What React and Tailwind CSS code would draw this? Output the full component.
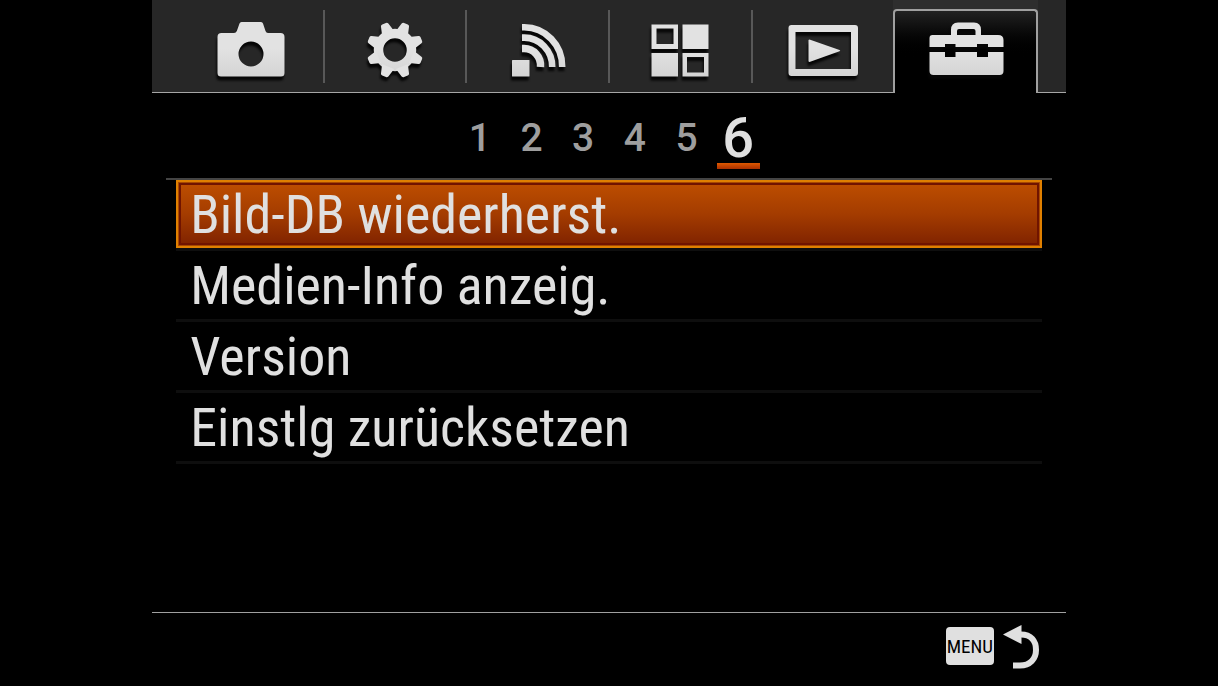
import React from "react";

const GEAR_TEETH = [22.5, 67.5, 112.5, 157.5, 202.5, 247.5, 292.5, 337.5];

function CameraIcon() {
  return (
    <path
      fillRule="evenodd"
      d="M35.500 6H55Q56.500 6 57 7.500L59.500 15Q60.200 17 62 17H74.500Q78.500 17 78.500 21V57Q78.500 60.500 75 60.500H15Q11.500 60.500 11.500 57V21Q11.500 17 15.500 17H28Q30 17 30.800 15L33.500 7.500Q34 6 35.500 6ZM45 25.500A12.500 12.500 0 1 0 45 50.500A12.500 12.500 0 1 0 45 25.500Z"
    />
  );
}

function GearIcon() {
  return (
    <>
      <circle cx="47" cy="34" r="16.5" fill="none" stroke="url(#metal)" strokeWidth="9.500" />
      {GEAR_TEETH.map((angle) => (
        <path
          key={angle}
          transform={`rotate(${angle} 47 34)`}
          d="M40.500 16L43 7Q43.500 5.500 45 5.500H49Q50.500 5.500 51 7L53.500 16Z"
        />
      ))}
    </>
  );
}

function WirelessIcon() {
  return (
    <>
      <rect x="21" y="44" width="17.500" height="16.500" rx="0.500" />
      <g fill="none" stroke="url(#metal)" strokeWidth="6.600">
        <path d="M31 11.300H33A38 39 0 0 1 71.200 51" />
        <path d="M31 21.600H33A28 29 0 0 1 61.200 51" />
        <path d="M31 32.600H33A16.500 17 0 0 1 49.500 51" strokeWidth="7.500" />
      </g>
    </>
  );
}

function ApplicationsIcon() {
  return (
    <path
      fillRule="evenodd"
      d="M18.500 8.500H45V33H18.500ZM23.500 12.500V28H40.500V12.500ZM49.500 8.500H75.500V33H49.500ZM18.500 37H45V60.500H18.500ZM49.500 37H75.500V60.500H49.500ZM54 41V56.500H71V41Z"
    />
  );
}

function PlaybackIcon() {
  return (
    <>
      <path
        fillRule="evenodd"
        d="M15.500 9H79Q82 9 82 12V57Q82 60 79 60H15.500Q12.500 60 12.500 57V12Q12.500 9 15.500 9ZM19.500 16V53H75V16Z"
      />
      <path d="M33.500 23.500L63.500 34Q65 34.600 63.500 35.200L33.500 46Q32.500 46 32.500 45V24.500Q32.500 23.500 33.500 23.500Z" />
    </>
  );
}

function ToolboxIcon() {
  return (
    <>
      <path
        fillRule="evenodd"
        d="M11.500 31V22Q11.500 19 14.500 19H33V14Q33 6.500 40 6.500H56Q63 6.500 63 14V19H80Q85.500 19 85.500 24V31H70V28H59V31H37.500V28H27V31ZM39 19H57.500V15Q57.500 13 55.500 13H41Q39 13 39 15Z"
      />
      <path d="M11.500 36H27V41H37.500V36H59V41H70V36H85.500V55Q85.500 59 81.500 59H15.500Q11.500 59 11.500 55Z" />
    </>
  );
}

const TABS = [
  { label: "Kamera", Icon: CameraIcon },
  { label: "Benutzereinstellungen", Icon: GearIcon },
  { label: "Drahtlos", Icon: WirelessIcon },
  { label: "Applikation", Icon: ApplicationsIcon },
  { label: "Wiedergabe", Icon: PlaybackIcon },
  { label: "Setup", Icon: ToolboxIcon },
];

const PAGES = [1, 2, 3, 4, 5, 6];

const ITEMS = [
  "Bild-DB wiederherst.",
  "Medien-Info anzeig.",
  "Version",
  "Einstlg zurücksetzen",
];

function TabIcon({ Icon }) {
  return (
    <svg
      viewBox="-1 0 96 64"
      className="h-16 w-24 shrink-0 overflow-visible drop-shadow-[-1px_4px_1px_#060606]"
      aria-hidden="true"
    >
      <defs>
        <linearGradient id="metal" gradientUnits="userSpaceOnUse" x1="0" y1="0" x2="0" y2="64">
          <stop offset="0.5" stopColor="#e2e2e2" />
          <stop offset="1" stopColor="#d2d2d2" />
        </linearGradient>
      </defs>
      <g fill="url(#metal)">
        <Icon />
      </g>
    </svg>
  );
}

function Tab({ label, Icon, active, divider }) {
  if (active) {
    return (
      <button
        type="button"
        role="tab"
        aria-selected="true"
        aria-label={label}
        className="-ml-0.5 flex items-start bg-[#2e2e2e] pt-[9px]"
      >
        <span className="flex h-[84px] w-full justify-center rounded-t border-x-2 border-t-2 border-[#a0a0a0] bg-linear-to-b from-[#222222] via-black via-60% to-black pt-[5px]">
          <TabIcon Icon={Icon} />
        </span>
      </button>
    );
  }
  return (
    <button
      type="button"
      role="tab"
      aria-selected="false"
      aria-label={label}
      className="flex items-start border-b border-[#a6a6a6] pt-2.5"
    >
      <span
        className={`flex h-[73px] w-full justify-center border-r-2 pt-1.5 ${
          divider ? "border-[#585858]" : "border-transparent"
        }`}
      >
        <TabIcon Icon={Icon} />
      </span>
    </button>
  );
}

export default function App() {
  return (
    <div className="flex min-h-screen justify-center bg-black font-['Roboto_Condensed','Liberation_Sans',sans-serif] text-[#e0e0e0]">
      <main className="flex w-3/4 flex-col">
        <div className="flex bg-[#272727]">
          <span className="w-[30px] border-b border-[#a6a6a6]" />
          <div role="tablist" className="grid h-[93px] flex-1 grid-cols-6">
            {TABS.map((tab, i) => (
              <Tab
                key={tab.label}
                label={tab.label}
                Icon={tab.Icon}
                active={i === 5}
                divider={i < 4}
              />
            ))}
          </div>
          <span className="w-7 border-b border-[#a6a6a6]" />
        </div>

        <nav
          aria-label="Seiten"
          className="mx-3.5 flex h-[87px] justify-center border-b-2 border-[#444444] font-[Roboto,sans-serif] font-medium"
        >
          <div className="grid w-[310px] grid-cols-6 justify-items-center">
            {PAGES.map((page) =>
              page === 6 ? (
                <button key={page} type="button" aria-current="page" className="flex w-[43px] flex-col items-center">
                  <span className="h-[70px] text-[56px] leading-[90px]">{page}</span>
                  <span className="h-1.5 w-full bg-linear-to-b from-[#e05800] to-[#a83000]" />
                </button>
              ) : (
                <button
                  key={page}
                  type="button"
                  className="flex w-[43px] items-start justify-center text-[39px] leading-[90px] text-[#9e9e9e]"
                >
                  {page}
                </button>
              ),
            )}
          </div>
        </nav>

        <ul className="mx-6">
          {ITEMS.map((item, i) => (
            <li key={item} className="border-b-[3px] border-[#0e0e0e]">
              <button
                type="button"
                className={`block h-[68px] w-full pl-3.5 text-left text-[54px] leading-[70px] whitespace-nowrap ${
                  i === 0
                    ? "bg-linear-to-b from-[#c05000] via-[#a43c00] to-[#7c2000] shadow-[inset_0_0_0_2px_#e08000,inset_0_0_0_3px_#a84800,inset_0_0_0_5px_#701400]"
                    : ""
                }`}
              >
                {item}
              </button>
            </li>
          ))}
        </ul>

        <footer className="mt-auto flex h-[74px] items-start justify-end border-t border-[#a0a0a0] pr-[26px]">
          <button type="button" className="flex items-start gap-2 pt-[11px]" aria-label="MENU zurück">
            <span className="mt-[3px] flex h-[38px] w-12 items-center justify-center rounded bg-[#e0e0e0] text-[19px] leading-none text-black">
              MENU
            </span>
            <svg viewBox="0 0 38 46" className="h-[46px] w-[38px]" aria-hidden="true">
              <path d="M1 10.500L19.500 1V20Z" fill="#e0e0e0" />
              <path
                d="M19 10.500C29 10.500 34 17 34 26C34 35 28 41.500 18 41.500H11"
                fill="none"
                stroke="#e0e0e0"
                strokeWidth="6"
              />
            </svg>
          </button>
        </footer>
      </main>
    </div>
  );
}
